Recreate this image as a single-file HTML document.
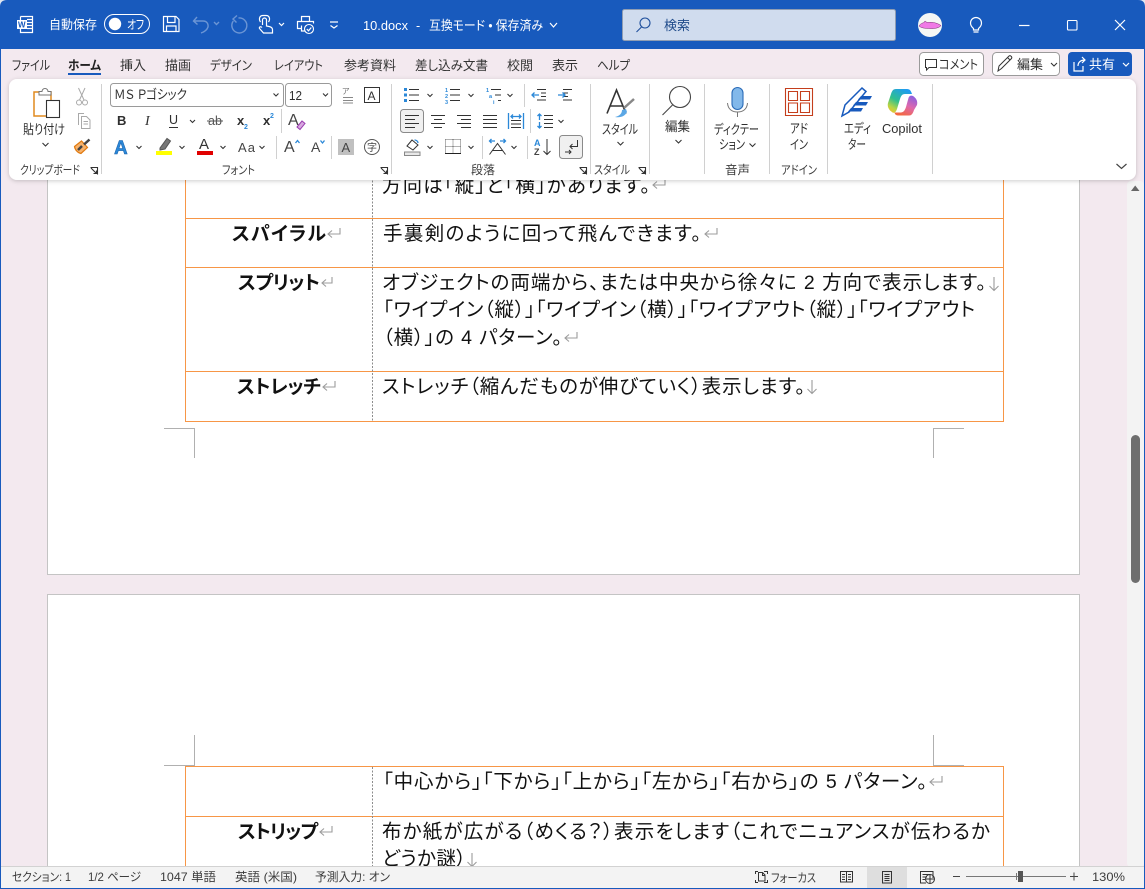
<!DOCTYPE html>
<html lang="ja"><head><meta charset="utf-8"><title>10.docx</title>
<style>
html,body{margin:0;padding:0;background:#f3e9ef;width:1145px;height:889px;overflow:hidden}
svg{display:block;position:absolute;left:0;top:0}
text{font-family:"Liberation Sans","Noto Sans CJK JP",sans-serif;font-size:12.5px;fill:#2f2f2f;white-space:pre;font-feature-settings:"palt"}
.w{fill:#fff}
.tab{font-size:13px;fill:#333}
.d{font-size:19.5px;fill:#111}
.b{font-size:19px;font-weight:700;fill:#111}
.st{font-size:12px;fill:#3c3c3c}
.l{font-size:12px;fill:#3c3c3c}
.i{fill:none;stroke:#333;stroke-width:1}
.bl{fill:none;stroke:#2b88d8;stroke-width:1.3}
.c{fill:none;stroke:#333;stroke-width:1.1}
.tw{fill:none;stroke:#fff;stroke-width:1.2}
.f{fill:none;stroke:#fff;stroke-opacity:.36;stroke-width:1.4}
.o{fill:none;stroke:#f79646;stroke-width:1}
.cm{fill:none;stroke:#b0b0b0;stroke-width:1}
.p{fill:none;stroke:#9c9c9c;stroke-width:1.1}
.sep{stroke:#d0d0d0;stroke-width:1}
</style></head><body>
<svg width="1145" height="889" viewBox="0 0 1145 889" xmlns="http://www.w3.org/2000/svg">
<defs>
<filter id="sh" x="-2%" y="-10%" width="104%" height="125%"><feDropShadow dx="0" dy="1" stdDeviation="2" flood-color="#000" flood-opacity=".2"/></filter>
<linearGradient id="cp1" x1="0.7" y1="0" x2="0.1" y2="1"><stop offset="0" stop-color="#1f9cf0"/><stop offset=".5" stop-color="#2fc08e"/><stop offset=".8" stop-color="#b9d443"/><stop offset="1" stop-color="#f4c02c"/></linearGradient>
<linearGradient id="cp2" x1="0.8" y1="0" x2="0.3" y2="1"><stop offset="0" stop-color="#8a5fe0"/><stop offset=".5" stop-color="#dd68ae"/><stop offset="1" stop-color="#f5683c"/></linearGradient>
</defs>

<!-- window background -->
<rect x="0" y="0" width="1145" height="889" fill="#185abd"/>
<rect x="1" y="49" width="1143" height="839" fill="#f3e9ef"/>

<!-- pages -->
<rect x="47.5" y="100" width="1032" height="474.5" fill="#fff" stroke="#c4c4c4"/>
<rect x="47.5" y="594.5" width="1032" height="300" fill="#fff" stroke="#c4c4c4"/>

<!-- page 1 table -->
<path class="o" d="M185.500 170V421.500H1003.500V170M185.500 218.500H1003.500M185.500 267.500H1003.500M185.500 371.500H1003.500"/>
<path d="M372.500 170V421" stroke="#8c8c8c" stroke-dasharray="2 1.500" fill="none"/>
<path class="cm" d="M164 428.500H194.500V458M964 428.500H933.500V458"/>

<text class="d" x="382" y="192" textLength="268" lengthAdjust="spacing">方向は「縦」と「横」があります。</text>
<path class="p" d="M665 179V185H653M657 181.500L653 185L657 188.500"/>
<text class="b" x="232" y="240" textLength="94" lengthAdjust="spacing">スパイラル</text>
<path class="p" d="M340 228V234H328M332 230.500L328 234L332 237.500"/>
<text class="d" x="383" y="240" textLength="318" lengthAdjust="spacing">手裏剣のように回って飛んできます。</text>
<path class="p" d="M717 228V234H705M709 230.500L705 234L709 237.500"/>

<text class="b" x="238" y="289" textLength="82" lengthAdjust="spacing">スプリット</text>
<path class="p" d="M332 277V283H322M326 279.500L322 283L326 286.500"/>
<text class="d" x="382" y="289" textLength="604" lengthAdjust="spacing">オブジェクトの両端から、または中央から徐々に 2 方向で表示します。</text>
<path class="p" d="M994 277V290M989.500 286L994 290.500L998.500 286"/>
<text class="d" x="383" y="316" textLength="592" lengthAdjust="spacing">「ワイプイン（縦）」「ワイプイン（横）」「ワイプアウト（縦）」「ワイプアウト</text>
<text class="d" x="383" y="344" textLength="179" lengthAdjust="spacing">（横）」の 4 パターン。</text>
<path class="p" d="M577 332V338H565M569 334.500L565 338L569 341.500"/>

<text class="b" x="237" y="393" textLength="84" lengthAdjust="spacing">ストレッチ</text>
<path class="p" d="M335 381V387H323M327 383.500L323 387L327 390.500"/>
<text class="d" x="382" y="393" textLength="423" lengthAdjust="spacing">ストレッチ（縮んだものが伸びていく）表示します。</text>
<path class="p" d="M812 380V393M807.500 389L812 393.500L816.500 389"/>

<!-- page 2 table -->
<path class="cm" d="M194.500 735V765.500H164M933.500 735V765.500H964"/>
<path class="o" d="M185.500 880V766.500H1003.500V880M185.500 816.500H1003.500"/>
<path d="M372.500 767V880" stroke="#8c8c8c" stroke-dasharray="2 1.500" fill="none"/>
<text class="d" x="383" y="788" textLength="544" lengthAdjust="spacing">「中心から」「下から」「上から」「左から」「右から」の 5 パターン。</text>
<path class="p" d="M942 776V782H930M934 778.500L930 782L934 785.500"/>
<text class="b" x="238" y="838" textLength="80" lengthAdjust="spacing">ストリップ</text>
<path class="p" d="M332 826V832H320M324 828.500L320 832L324 835.500"/>
<text class="d" x="382" y="838" textLength="608" lengthAdjust="spacing">布か紙が広がる（めくる？）表示をします（これでニュアンスが伝わるか</text>
<text class="d" x="382" y="865" textLength="84" lengthAdjust="spacing">どうか謎）</text>
<path class="p" d="M472 853V866M467.500 862L472 866.500L476.500 862"/>

<!-- scrollbar -->
<rect x="1127" y="181" width="17" height="686" rx="4" fill="#f3f3f3"/>
<path d="M1131 191L1135.200 185.500L1139.500 191Z" fill="#666"/>
<rect x="1131" y="435" width="9" height="148" rx="4.500" fill="#6e6e6e"/>

<!-- status bar -->
<rect x="1" y="866" width="1143" height="22" fill="#f3f3f3"/>
<path d="M1 866.500H1144" stroke="#d2d2d2"/>
<rect x="0" y="888" width="1145" height="1" fill="#185abd"/>
<rect x="0" y="0" width="1" height="889" fill="#185abd"/>
<rect x="1144" y="0" width="1" height="889" fill="#185abd"/>
<text class="st" x="12" y="881" textLength="59" lengthAdjust="spacingAndGlyphs">セクション: 1</text>
<text class="st" x="88" y="881" textLength="53" lengthAdjust="spacingAndGlyphs">1/2 ページ</text>
<text class="st" x="160" y="881" textLength="56" lengthAdjust="spacingAndGlyphs">1047 単語</text>
<text class="st" x="235" y="881" textLength="62" lengthAdjust="spacingAndGlyphs">英語 (米国)</text>
<text class="st" x="315" y="881" textLength="75" lengthAdjust="spacingAndGlyphs">予測入力: オン</text>
<path class="i" d="M758 871.500H755.500V874M764 871.500H767.500V874M755.500 880V882.500H758M767.500 880V882.500H764M758.500 881V872.500H762.500L765 875V881ZM762.500 872.500V875.500H765"/>
<text class="st" x="771" y="882" textLength="45" lengthAdjust="spacingAndGlyphs">フォーカス</text>
<path class="i" d="M840.500 871.500H846.500V882H840.500ZM846.500 871.500H852.500V882H846.500ZM842 874.500H845M842 877H845M842 879.500H845M848 874.500H851M848 877H851M848 879.500H851"/>
<rect x="867" y="867" width="40" height="21" fill="#dedede"/>
<path class="i" d="M882.500 871.500H891.500V883H882.500ZM884.500 874.500H889.500M884.500 876.500H889.500M884.500 878.500H889.500M884.500 880.500H889.500"/>
<path class="i" d="M933 878V871.500H920.500V883H926M922.500 874.500H930.500M922.500 877H927M922.500 879.500H925"/>
<circle class="i" cx="930" cy="879" r="4.500"/><path class="i" d="M925.500 879H934.500M930 874.500V883.500"/>
<path d="M953 876.500H960M1070 876.500H1078M1074 872.500V880.500" stroke="#444" fill="none"/>
<path d="M966 876.500H1066M1016.500 873V880" stroke="#777" fill="none"/>
<rect x="1018" y="871" width="5" height="11" fill="#555"/>
<text class="st" x="1092" y="881" textLength="33" lengthAdjust="spacingAndGlyphs">130%</text>

<!-- title bar -->
<rect x="0" y="0" width="1145" height="49" fill="#185abd"/>
<path d="M0 0H7Q0 0 0 7ZM1145 0H1138Q1145 0 1145 7Z" fill="#dfe6f0"/>
<!-- word icon -->
<path class="tw" d="M20.500 16.500H32.500V32.500H20.500V27M20.500 21V16.500M27 19.500H32.500M27 22.500H32.500M27 25.500H32.500M27 28.500H32.500"/>
<rect x="17" y="20" width="10" height="9" fill="#fff"/>
<text x="18" y="27.500" style="font-size:8px;font-weight:700;fill:#185abd">W</text>
<text class="w" x="49" y="29" textLength="48" lengthAdjust="spacingAndGlyphs">自動保存</text>
<rect x="104.500" y="14.500" width="45" height="19" rx="9.500" fill="none" stroke="#fff"/>
<circle cx="115" cy="24" r="6.200" fill="#fff"/>
<text class="w" x="127" y="29" textLength="17" lengthAdjust="spacingAndGlyphs">オフ</text>
<!-- save -->
<path class="tw" d="M163.500 16.500H176L179 19.500V31.500H163.500ZM167.500 16.500V22.500H175V16.500M166.500 31.500V26H176V31.500"/>
<!-- undo/redo -->
<path class="f" d="M197 17L193.500 21L197.500 24.500M194 21H203C207 21 208.500 24 208 27C207 30 204 32 201 33"/>
<path class="f" d="M214 22L216.500 24.500L219 22" />
<path class="f" d="M236.500 15L232.500 18.500L236 22M238 17.500A7.500 7.500 0 1 1 232.800 20.500" transform="translate(.5,.5)"/>
<!-- touch -->
<path class="tw" d="M262.500 25V20A2 2 0 0 1 266.500 20V26L269 26.500C271 27 272.500 27.500 272.500 29.500V33H263.500L259.500 28.500C259 27 260.500 26 262 27.500M260.500 22C258.500 19 259.500 15.500 263 15.500H266C269.500 15.500 270.500 19 268.500 22"/>
<path class="tw" d="M279 23L281.500 25.500L284 23"/>
<!-- print -->
<path class="tw" d="M301.500 21V16.500H309.500V21M301.500 28.500H297.500V21.500H313.500V23.500M301.500 25.500V31H305"/>
<circle cx="309" cy="29" r="4.500" fill="#185abd" stroke="#fff" stroke-width="1.100"/>
<path class="tw" d="M306.800 29L308.500 30.800L311.300 27.500"/>
<!-- customize -->
<path class="tw" d="M330 22H338M330.500 25.500L334 28L337.500 25.500"/>
<text class="w" x="363" y="30" textLength="45" lengthAdjust="spacingAndGlyphs" style="font-size:13px">10.docx</text>
<text class="w" x="416" y="30">-</text>
<text class="w" x="429" y="30" textLength="114" lengthAdjust="spacingAndGlyphs" style="font-size:13px">互換モード • 保存済み</text>
<path class="tw" d="M549 23L552.500 27L556 23" transform="translate(1,0)"/>
<!-- search -->
<rect x="622.500" y="9.500" width="273" height="31" rx="2" fill="#d0dcee" stroke="#8f9db3"/>
<circle cx="645" cy="23" r="5" fill="none" stroke="#1e4f9c" stroke-width="1.100"/>
<path d="M641.500 27L636.500 32" stroke="#1e4f9c" stroke-width="1.100"/>
<text x="664" y="30" textLength="26" lengthAdjust="spacingAndGlyphs" style="fill:#1e4a8a;font-size:13px">検索</text>
<!-- avatar -->
<circle cx="930" cy="25" r="12" fill="#f5f7f5"/>
<path d="M919 26C921 23 923 23 924 22.500L925 21L927 22.500C930 22 936 22 941 25.500C940 27.500 935 29 930 28.500C925 28.500 921 28 919 26Z" fill="#f07ae6" stroke="#77306f" stroke-width=".5"/>
<!-- bulb -->
<path class="tw" d="M973.500 28.500C971 26.500 970.500 24.500 970.500 23A5.500 5.500 0 0 1 981.500 23C981.500 24.500 981 26.500 978.500 28.500V30H973.500ZM973.500 32H978.500"/>
<!-- window controls -->
<path class="tw" d="M1019 25.500H1029.500"/>
<rect x="1067.500" y="20.500" width="9.500" height="9.500" rx="1" fill="none" stroke="#fff" stroke-width="1.100"/>
<path class="tw" d="M1115 20L1125 30M1125 20L1115 30"/>

<!-- tabs -->
<text class="tab" x="12" y="70" textLength="38" lengthAdjust="spacingAndGlyphs">ファイル</text>
<text class="tab" x="68" y="70" textLength="33" lengthAdjust="spacingAndGlyphs" style="font-weight:700;fill:#222">ホーム</text>
<rect x="68" y="73" width="33" height="2" fill="#185abd"/>
<text class="tab" x="120" y="70" textLength="26" lengthAdjust="spacingAndGlyphs">挿入</text>
<text class="tab" x="165" y="70" textLength="26" lengthAdjust="spacingAndGlyphs">描画</text>
<text class="tab" x="210" y="70" textLength="42" lengthAdjust="spacingAndGlyphs">デザイン</text>
<text class="tab" x="274" y="70" textLength="49" lengthAdjust="spacingAndGlyphs">レイアウト</text>
<text class="tab" x="344" y="70" textLength="52" lengthAdjust="spacingAndGlyphs">参考資料</text>
<text class="tab" x="415" y="70" textLength="73" lengthAdjust="spacingAndGlyphs">差し込み文書</text>
<text class="tab" x="507" y="70" textLength="26" lengthAdjust="spacingAndGlyphs">校閲</text>
<text class="tab" x="552" y="70" textLength="26" lengthAdjust="spacingAndGlyphs">表示</text>
<text class="tab" x="597" y="70" textLength="33" lengthAdjust="spacingAndGlyphs">ヘルプ</text>

<!-- right buttons -->
<rect x="919.500" y="52.500" width="64" height="23" rx="4" fill="#fff" stroke="#9a9a9a"/>
<path class="i" d="M925.500 59.500H936.500V67.500H929L926.500 70V67.500H925.500Z"/>
<text x="939" y="69" textLength="39" lengthAdjust="spacingAndGlyphs" style="font-size:13px">コメント</text>
<rect x="992.500" y="52.500" width="67" height="23" rx="4" fill="#fff" stroke="#9a9a9a"/>
<path class="i" d="M998 71L999 66L1009 56C1010.500 55 1012.500 57 1011.500 58.500L1001.500 68.500ZM1007.500 57.500L1010 60"/>
<text x="1017" y="69" textLength="26" lengthAdjust="spacingAndGlyphs" style="font-size:13px">編集</text>
<path class="c" d="M1051 63L1054 66L1057 63"/>
<rect x="1068" y="52" width="64" height="24" rx="4" fill="#185abd"/>
<path class="tw" d="M1074 62V71H1083V66M1078 66C1078 62 1081 60 1085 60M1082 57L1085 60L1082 63"/>
<text class="w" x="1089" y="69" textLength="26" lengthAdjust="spacingAndGlyphs" style="font-size:13px">共有</text>
<path class="tw" d="M1123 63L1126 66L1129 63"/>

<!-- ribbon -->
<rect x="9" y="79" width="1127" height="101" rx="8" fill="#fff" filter="url(#sh)"/>
<path class="sep" d="M101.500 84V174M391.500 84V174M590.500 84V174M649.500 84V174M704.500 84V174M769.500 84V174M827.500 84V174M932.500 84V174M281.500 109V133M276.500 136V159M331.500 136V159M524.500 84V107M530.500 109V133M482.500 136V159M527.500 136V159"/>

<!-- clipboard group -->
<path d="M34 92H51V116H34Z" fill="#fff" stroke="#e08a1e" stroke-width="1.500"/>
<path d="M39 95V91.500H42A3 3 0 0 1 48 91.500H51V95Z" fill="#fff" stroke="#777"/>
<rect x="46.500" y="100.500" width="13" height="17" fill="#fff" stroke="#333" stroke-width="1.100"/>
<text x="23" y="134" textLength="42" lengthAdjust="spacingAndGlyphs" style="font-size:13px">貼り付け</text>
<path class="c" d="M42.500 143L45.500 146L48.500 143"/>
<!-- scissors -->
<path d="M78.500 88L84 100M85 88L79.500 100" stroke="#a9a9a9" fill="none"/>
<circle cx="79" cy="102.500" r="2.500" fill="none" stroke="#a9a9a9"/><circle cx="85" cy="102.500" r="2.500" fill="none" stroke="#a9a9a9"/>
<!-- copy -->
<path d="M78.500 125V113.500H84M81.500 116.500H86.500L90 120V128.500H81.500ZM83.500 121.500H88M83.500 124H88" fill="none" stroke="#a9a9a9"/>
<!-- brush -->
<path d="M74.500 146.500L81.500 141L87.500 147.500L81 153.500C78 153 75 150 74.500 146.500Z" fill="#f7b26b" stroke="#e07a10" stroke-width="1.200"/>
<path d="M78 150L82 146M84 144.500L89.500 139.500" stroke="#444" stroke-width="2.500"/>
<text class="l" x="20" y="174" textLength="60" lengthAdjust="spacingAndGlyphs">クリップボード</text>
<path class="c" d="M90.500 167.500H97.500V174.500M91 168L96.500 173.500M96.500 170.500V173.500H93.500" stroke-width=".9"/>

<!-- font group -->
<rect x="110.500" y="83.500" width="173" height="23" rx="3" fill="#fff" stroke="#9a9a9a"/>
<text x="114" y="99" textLength="73" lengthAdjust="spacingAndGlyphs" style="font-size:13px">ＭＳ Ｐゴシック</text>
<path class="c" d="M273.500 93.500L276 96L278.500 93.500"/>
<rect x="285.500" y="83.500" width="46" height="23" rx="3" fill="#fff" stroke="#9a9a9a"/>
<text x="289" y="100" textLength="13" lengthAdjust="spacingAndGlyphs" style="font-size:13px">12</text>
<path class="c" d="M323 93.500L325.500 96L328 93.500"/>
<text x="342" y="94" style="font-size:8px;fill:#777">ア</text>
<path d="M343 97.500H353M343 100.500H353M343 103H353" stroke="#888" fill="none"/>
<rect x="364.500" y="87.500" width="15" height="15" fill="#fff" stroke="#333"/>
<text x="367.500" y="100" style="font-size:12px">A</text>
<text x="117" y="125" style="font-size:13px;font-weight:700">B</text>
<text x="145" y="125" style="font-family:'Liberation Serif',serif;font-size:14px;font-style:italic">I</text>
<text x="169" y="124" style="font-size:12.500px">U</text><path d="M169 127.500H178" stroke="#333"/>
<path class="c" d="M190 120L192.500 122.500L195 120"/>
<text x="208" y="125" style="font-size:12.500px;fill:#555">ab</text><path d="M207 121H223" stroke="#555"/>
<text x="237" y="125" style="font-size:13px;font-weight:700">x</text><text x="244" y="129" style="font-size:7px;fill:#2b88d8;font-weight:700">2</text>
<text x="263" y="125" style="font-size:13px;font-weight:700">x</text><text x="270" y="118" style="font-size:7px;fill:#2b88d8;font-weight:700">2</text>
<text x="288" y="125" style="font-size:16px;fill:#444">A</text>
<path d="M297 127L302 121L305 123.500L300 129.500Z" fill="#d8a8e0" stroke="#9a3fb0"/>
<text x="114" y="154" style="font-size:19px;font-weight:700;fill:#2b88d8;stroke:#1a5fa8;stroke-width:.5">A</text>
<path class="c" d="M136.500 146L139 148.500L141.500 146"/>
<path d="M160 148L167 138.500L170.500 141L165 149L160 150Z" fill="#777" stroke="#555"/>
<rect x="156" y="151" width="16" height="4" fill="#ffff00"/>
<path class="c" d="M179.500 146L182 148.500L184.500 146"/>
<text x="199" y="149" style="font-size:15px;fill:#333">A</text>
<rect x="197" y="151" width="16" height="4" fill="#e00000"/>
<path class="c" d="M220.500 146L223 148.500L225.500 146"/>
<text x="238" y="152" textLength="17" style="font-size:13px;fill:#444">Aa</text>
<path class="c" d="M259.500 146L262 148.500L264.500 146"/>
<text x="284" y="152" style="font-size:16px;fill:#444">A</text><path class="bl" d="M295.500 143L297.500 140.500L299.500 143"/>
<text x="311" y="152" style="font-size:14px;fill:#444">A</text><path class="bl" d="M320.500 140.500L322.500 143L324.500 140.500"/>
<rect x="338" y="139" width="16" height="16" fill="#c0c0c0"/>
<text x="341.500" y="152" style="font-size:13px;fill:#444">A</text>
<circle cx="372" cy="147" r="7.500" fill="none" stroke="#555"/>
<text x="367" y="151" style="font-size:10px;fill:#444">字</text>
<text class="l" x="222" y="174" textLength="33" lengthAdjust="spacingAndGlyphs">フォント</text>
<path class="c" d="M380.500 167.500H387.500V174.500M381 168L386.500 173.500M386.500 170.500V173.500H383.500" stroke-width=".9"/>

<!-- paragraph group -->
<path d="M404 88h3v3h-3zM404 93.500h3v3h-3zM404 99h3v3h-3z" fill="#2b88d8"/>
<path class="i" d="M409 89.500H419M409 95H419M409 100.500H419"/>
<path class="c" d="M427.500 94L430 96.500L432.500 94"/>
<text x="445" y="92" style="font-size:5.500px;fill:#2b88d8;font-weight:700">1</text><text x="445" y="98" style="font-size:5.500px;fill:#2b88d8;font-weight:700">2</text><text x="445" y="104" style="font-size:5.500px;fill:#2b88d8;font-weight:700">3</text>
<path class="i" d="M450 89.500H460M450 95H460M450 100.500H460"/>
<path class="c" d="M468.500 94L471 96.500L473.500 94"/>
<text x="486" y="92" style="font-size:5.500px;fill:#2b88d8;font-weight:700">1</text><text x="489" y="98" style="font-size:5.500px;fill:#2b88d8;font-weight:700">a</text><text x="493" y="104" style="font-size:5.500px;fill:#2b88d8;font-weight:700">i</text>
<path class="i" d="M491 89.500H501M495 95H501M498 100.500H501"/>
<path class="c" d="M507.500 94L510 96.500L512.500 94"/>
<path class="i" d="M537 89.500H546M541 93H546M541 96.500H546M537 100H546"/>
<path class="bl" d="M532 95H539M534.500 92.500L532 95L534.500 97.500"/>
<path class="i" d="M563 89.500H572M563 93H568M563 96.500H568M563 100H572" transform="translate(0,0)"/>
<path class="bl" d="M558 95H565M562.500 92.500L565 95L562.500 97.500"/>
<rect x="400.500" y="109.500" width="23" height="23" rx="3" fill="#f0f0f0" stroke="#8a8a8a"/>
<path class="i" d="M405 115.500H419M405 119.500H415M405 123.500H419M405 127.500H415"/>
<path class="i" d="M431 115.500H445M434 119.500H442M431 123.500H445M434 127.500H442"/>
<path class="i" d="M457 115.500H471M461 119.500H471M457 123.500H471M461 127.500H471"/>
<path class="i" d="M483 115.500H497M483 119.500H497M483 123.500H497M483 127.500H497"/>
<path class="bl" d="M508.500 113V129M523.500 113V129M511 116.500H521M513 114.500L511 116.500L513 118.500M519 114.500L521 116.500L519 118.500"/>
<path class="i" d="M511 120.500H521M511 124H521M511 127.500H521"/>
<path class="bl" d="M539.500 114V120M537.500 116L539.500 114L541.500 116M539.500 128V122M537.500 126L539.500 128L541.500 126"/>
<path class="i" d="M544 115.500H553M544 119.500H553M544 123.500H553M544 127.500H553"/>
<path class="c" d="M558.500 120L561 122.500L563.500 120"/>
<path class="i" d="M407 146L412 140L418 145L413 150Z"/><path d="M404.500 152H420V155.500H404.500Z" fill="#e8e8e8" stroke="#888"/>
<path class="bl" d="M418 143C418 141 416 140 414.500 140"/>
<path class="c" d="M427.500 146L430 148.500L432.500 146"/>
<path d="M445.500 139.500H460.500M445.500 146.500H460.500M445.500 139.500V153.500M453 139.500V153.500M460.500 139.500V153.500" stroke="#666" stroke-dasharray="1 1" fill="none"/>
<path d="M445 153.500H461" stroke="#222"/>
<path class="c" d="M468.500 146L471 148.500L473.500 146"/>
<path class="bl" d="M489.500 141H495M491.500 139L489.500 141L491.500 143M500 141H505.500M503.500 139L505.500 141L503.500 143"/>
<path class="i" d="M489.500 154.500L497.500 143.500L505.500 154.500M492.500 150.500H502.500"/>
<path class="c" d="M511.500 146L514 148.500L516.500 146"/>
<text x="534" y="146" style="font-size:9px;fill:#2b88d8;font-weight:700">A</text>
<text x="534" y="155" style="font-size:9px;fill:#444;font-weight:700">Z</text>
<path class="i" d="M547 139V154M543.500 151L547 154.500L550.500 151"/>
<rect x="559.500" y="135.500" width="23" height="23" rx="3" fill="#f0f0f0" stroke="#8a8a8a"/>
<path class="i" d="M577.500 140V146.500H570M572.500 144L570 146.500L572.500 149M565 152H571M569 150L571 152L569 154"/>
<text class="l" x="471" y="174" textLength="24" lengthAdjust="spacingAndGlyphs">段落</text>
<path class="c" d="M579.500 167.500H586.500V174.500M580 168L585.500 173.500M585.500 170.500V173.500H582.500" stroke-width=".9"/>

<!-- styles -->
<path d="M607 113.500L616.500 90L626 113.500M610 106H623" fill="none" stroke="#333" stroke-width="1.600"/>
<path d="M624 108L634 99" stroke="#888" stroke-width="2.500"/>
<path d="M615 117C620 116 622 113 622 110L626 109L627 112C625 116 621 118 615 117Z" fill="#5ba7e5"/>
<text x="602" y="134" textLength="36" lengthAdjust="spacingAndGlyphs" style="font-size:13px">スタイル</text>
<path class="c" d="M617.500 142L620.500 145L623.500 142"/>
<text class="l" x="594" y="174" textLength="36" lengthAdjust="spacingAndGlyphs">スタイル</text>
<path class="c" d="M638.500 167.500H645.500V174.500M639 168L644.500 173.500M644.500 170.500V173.500H641.500" stroke-width=".9"/>

<!-- edit -->
<circle cx="680" cy="97" r="10.500" fill="#fff" stroke="#444" stroke-width="1.100"/>
<path d="M672.500 105L662.500 115" stroke="#444" stroke-width="1.100"/>
<text x="665" y="131" textLength="25" lengthAdjust="spacingAndGlyphs" style="font-size:13px">編集</text>
<path class="c" d="M675.500 140L678.500 143L681.500 140"/>

<!-- dictate -->
<rect x="732" y="87.500" width="11" height="22" rx="5.500" fill="#82b8ea" stroke="#2b6cb8" stroke-width="1.100"/>
<path d="M727.500 103C728 110 733 112 737.500 112C742 112 747 110 747.500 103M737.500 112V117" fill="none" stroke="#777"/>
<text x="714" y="134" textLength="45" lengthAdjust="spacingAndGlyphs" style="font-size:13px">ディクテー</text>
<text x="719" y="149" textLength="26" lengthAdjust="spacingAndGlyphs" style="font-size:13px">ション</text>
<path class="c" d="M749.500 143.500L752.500 146.500L755.500 143.500"/>
<text class="l" x="725" y="174" textLength="25" lengthAdjust="spacingAndGlyphs">音声</text>

<!-- addin -->
<path d="M785.500 88.500H812.500V115.500H785.500ZM788.500 91.500H797.500V100.500H788.500ZM800.500 91.500H809.500V100.500H800.500ZM788.500 103H797.500V112.500H788.500ZM800.500 103H809.500V112.500H800.500Z" fill="none" stroke="#c43e1c" stroke-width="1.100"/>
<text x="790" y="133" textLength="18" lengthAdjust="spacingAndGlyphs" style="font-size:13px">アド</text>
<text x="790" y="149" textLength="18" lengthAdjust="spacingAndGlyphs" style="font-size:13px">イン</text>
<text class="l" x="781" y="174" textLength="36" lengthAdjust="spacingAndGlyphs">アドイン</text>

<!-- editor -->
<path d="M842 116L845 105L862 88L866 91.500L849 112Z" fill="#fff" stroke="#185abd" stroke-width="1.500"/>
<path d="M861 96H872L870 99.500H858ZM856 102H868L866 105.500H853ZM851 108H863L861 111.500H848Z" fill="#185abd"/>
<text x="844" y="133" textLength="27" lengthAdjust="spacingAndGlyphs" style="font-size:13px">エディ</text>
<text x="848" y="149" textLength="18" lengthAdjust="spacingAndGlyphs" style="font-size:13px">ター</text>

<!-- copilot -->
<path d="M896 89H907C910 89 911 91 912 94H905C902 94 901 96 900 99L897 109C896 112 894 114 892 112C889 110 887 107 888 103L891 94C892 91 893 89 896 89Z" fill="url(#cp1)"/>
<path d="M909 115.500H899C896 115.500 895 114.500 894.500 112.500H901C904 112 905 110 906 107L908.500 98C909 96 911 95 913 96C916 98 918 101 917 105L914 110C913 113 912 115.500 909 115.500Z" fill="url(#cp2)"/>
<text x="882" y="133" textLength="40" lengthAdjust="spacingAndGlyphs">Copilot</text>

<path d="M1116.500 164L1121.500 168.500L1126.500 164" fill="none" stroke="#444" stroke-width="1.200"/>
</svg>
</body></html>
